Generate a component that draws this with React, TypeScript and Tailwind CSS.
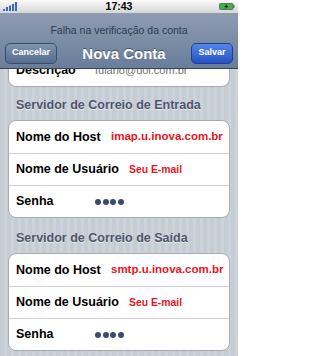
import React from "react";

type Row = { label: string; value?: string; kind: "host" | "user" | "pass" };

const entrada: Row[] = [
  { label: "Nome do Host", value: "imap.u.inova.com.br", kind: "host" },
  { label: "Nome de Usuário", value: "Seu E-mail", kind: "user" },
  { label: "Senha", kind: "pass" },
];

const saida: Row[] = [
  { label: "Nome do Host", value: "smtp.u.inova.com.br", kind: "host" },
  { label: "Nome de Usuário", value: "Seu E-mail", kind: "user" },
  { label: "Senha", kind: "pass" },
];

function StatusBar() {
  return (
    <div className="relative flex h-[13px] items-center justify-center bg-gradient-to-b from-[#fafafa] to-[#d6d6d6]">
      <svg className="absolute left-[3px] top-[2px]" width="16" height="9" viewBox="0 0 16 9">
        <rect x="0" y="7" width="2" height="2" fill="#3b66c4" />
        <rect x="3" y="5" width="2" height="4" fill="#3b66c4" />
        <rect x="6" y="3.5" width="2" height="5.5" fill="#3b66c4" />
        <rect x="9" y="2" width="2" height="7" fill="#3b66c4" />
        <rect x="12" y="0" width="2" height="9" fill="#3b66c4" />
      </svg>
      <span className="text-[10.5px] font-bold leading-none text-black">17:43</span>
      <svg className="absolute right-[3px] top-[3px]" width="16" height="7" viewBox="0 0 16 7">
        <rect x="0.5" y="0.5" width="13.5" height="6" rx="1" fill="#39b54a" stroke="#6b6b6b" />
        <rect x="14" y="2" width="1.5" height="3" fill="#6b6b6b" />
        <path d="M8 1 L5 4 L7 4 L6 6 L9.5 3 L7.5 3 Z" fill="#111" />
      </svg>
    </div>
  );
}

function NavBar() {
  return (
    <div className="flex h-[56px] flex-col border-b border-[#3a4656] bg-gradient-to-b from-[#8e9cb1] to-[#697d9b]">
      <p className="pt-[12px] text-center text-[10.5px] leading-none text-[#2e3b52]">
        Falha na verificação da conta
      </p>
      <div className="mt-[7px] flex items-center justify-between px-[5px]">
        <button className="flex h-[21px] w-[52px] items-center justify-center rounded-[5px] border border-[#3c4c66] bg-gradient-to-b from-[#7f93b0] to-[#566d90] text-[9px] font-bold text-white">
          Cancelar
        </button>
        <h1 className="text-[15px] font-bold leading-none text-white [text-shadow:0_-1px_0_#45536a]">
          Nova Conta
        </h1>
        <button className="flex h-[21px] w-[42px] items-center justify-center rounded-[5px] border border-[#1f3f8f] bg-gradient-to-b from-[#5585e6] to-[#2452c4] text-[9px] font-bold text-white">
          Salvar
        </button>
      </div>
    </div>
  );
}

function Value({ row }: { row: Row }) {
  if (row.kind === "pass") {
    return (
      <span className="flex gap-[1.5px]">
        {[0, 1, 2, 3].map((i) => (
          <span key={i} className="h-[6px] w-[6px] rounded-full bg-[#384b78]" />
        ))}
      </span>
    );
  }
  return (
    <span
      className={
        row.kind === "host"
          ? "text-[11.5px] font-bold text-[#e8141e]"
          : "text-[10.4px] font-bold text-[#e8141e]"
      }
    >
      {row.value}
    </span>
  );
}

function Card({ rows }: { rows: Row[] }) {
  return (
    <div className="mx-[8px] overflow-hidden rounded-[8px] border border-[#a8acb2] bg-white">
      {rows.map((row, i) => (
        <div
          key={row.label}
          className={
            "flex h-[32px] items-center pl-[7px] " + (i > 0 ? "border-t border-[#d0d0d0]" : "")
          }
        >
          <span
            className={
              "text-[12.5px] font-bold text-black " +
              (row.kind === "host"
                ? "w-[95px]"
                : row.kind === "user"
                ? "w-[113px]"
                : "w-[79px]")
            }
          >
            {row.label}
          </span>
          <Value row={row} />
        </div>
      ))}
    </div>
  );
}

export default function App() {
  return (
    <div className="h-[356px] w-[238px] overflow-hidden font-['Liberation_Sans',Arial,sans-serif] bg-[repeating-linear-gradient(90deg,#c5ccd4_0px,#c5ccd4_4px,#ccd3d9_4px,#ccd3d9_7px)]">
      <StatusBar />
      <NavBar />
      <div className="h-[287px] overflow-hidden">
        <div className="-mt-[15px] mx-[8px] flex h-[33px] items-center rounded-b-[8px] border border-t-0 border-[#a8acb2] bg-white pl-[7px]">
          <span className="w-[79px] text-[12.5px] font-bold text-black">Descrição</span>
          <span className="text-[11px] text-[#6f6f6f]">fulano@uol.com.br</span>
        </div>
        <h2 className="flex h-[33px] items-center pl-[16px] pt-[4px] text-[12.5px] font-bold text-[#4c566c] [text-shadow:0_1px_0_#e6eaee]">
          Servidor de Correio de Entrada
        </h2>
        <Card rows={entrada} />
        <h2 className="flex h-[35px] items-center pl-[16px] pt-[6px] text-[12.5px] font-bold text-[#4c566c] [text-shadow:0_1px_0_#e6eaee]">
          Servidor de Correio de Saída
        </h2>
        <Card rows={saida} />
      </div>
    </div>
  );
}
